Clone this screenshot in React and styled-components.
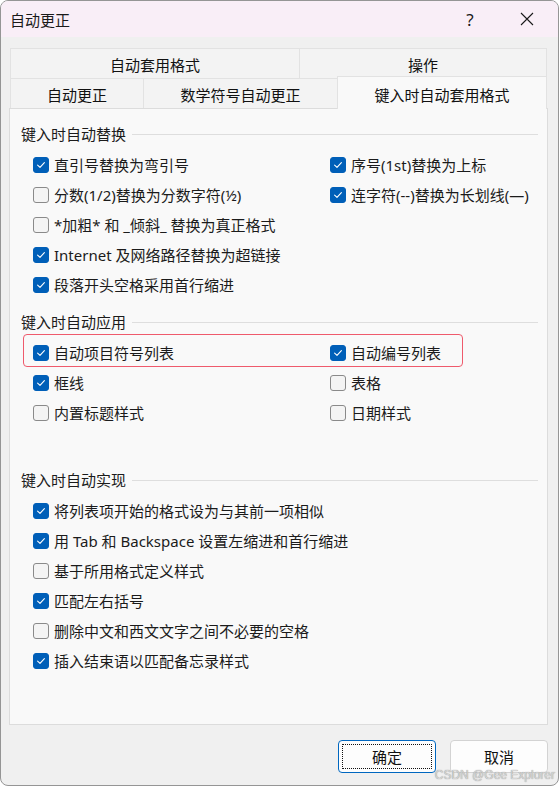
import styled, { createGlobalStyle, css } from 'styled-components'

const GlobalStyle = createGlobalStyle`
    html, body {
        margin: 0;
        padding: 0;
        background: #ffffff;
    }
    body {
        font-family: "Noto Sans", "Noto Sans CJK SC", sans-serif;
        color: #1b1b1b;
    }
`

const Dialog = styled.div`
    position: relative;
    width: 559px;
    height: 786px;
    box-sizing: border-box;
    border: 1px solid #959595;
    border-radius: 8px;
    overflow: hidden;
    background: #f0f0f0;
    display: flex;
    flex-direction: column;
`

const TitleBar = styled.div`
    height: 36px;
    flex: none;
    display: flex;
    align-items: center;
    padding-left: 9px;
    padding-right: 8px;
    background: #f9eef7;
`

const Title = styled.span`
    font-size: 15px;
    line-height: 20px;
    color: #1a1a1a;
    margin-top: 1px;
`

const TitleButton = styled.div`
    width: 46px;
    height: 36px;
    display: flex;
    align-items: center;
    justify-content: center;
    font-size: 17px;
    color: #1a1a1a;
    margin-left: ${(p) => p.$gap || 0}px;
`

const Body = styled.div`
    flex: 1;
    display: flex;
    flex-direction: column;
    padding: 11px 10px 0 8px;
`

const TabRow = styled.div`
    display: flex;
    height: 30px;
    margin: 0 1px;
`

const Tab = styled.div`
    box-sizing: border-box;
    width: ${(p) => (p.$width ? `${p.$width}px` : 'auto')};
    flex: ${(p) => (p.$width ? 'none' : 1)};
    display: flex;
    align-items: center;
    justify-content: center;
    font-size: 15px;
    line-height: 20px;
    color: #111;
    background: #f3f3f3;
    border-top: 1px solid #e2e2e2;
    border-left: 1px solid #e2e2e2;
    padding-top: 2px;
    &:last-child {
        border-right: 1px solid #e2e2e2;
    }
    ${(p) =>
        p.$active &&
        css`
            position: relative;
            z-index: 1;
            height: 33px;
            margin-top: -2px;
            background: #f9f9f9;
            padding-top: 3px;
        `}
`

const Panel = styled.div`
    box-sizing: border-box;
    height: 617px;
    border: 1px solid #dcdcdc;
    background: #f9f9f9;
    padding: 15px 9px 0 11px;
`

const Section = styled.div`
    margin-bottom: ${(p) => p.$after || 12}px;
`

const SectionTitle = styled.div`
    display: flex;
    align-items: center;
    gap: 6px;
    font-size: 15px;
    line-height: 20px;
    height: 20px;
    color: #1b1b1b;
    &::after {
        content: '';
        flex: 1;
        height: 1px;
        background: #dedede;
    }
`

const Rows = styled.div`
    margin-top: 6px;
    padding-left: 12px;
`

const Row = styled.div`
    position: relative;
    display: grid;
    grid-template-columns: 297px 1fr;
    height: 30px;
    align-items: center;
    ${(p) =>
        p.$highlight &&
        css`
            &::after {
                content: '';
                position: absolute;
                left: -10px;
                top: -4px;
                width: 438px;
                height: 31px;
                border: 1.5px solid #ef5a6c;
                border-radius: 4px;
                pointer-events: none;
            }
        `}
`

const Option = styled.label`
    display: flex;
    align-items: center;
    gap: 5px;
    font-size: 15px;
    line-height: 20px;
    color: #1b1b1b;
    white-space: nowrap;
`

const Box = styled.span`
    box-sizing: border-box;
    width: 16px;
    height: 16px;
    flex: none;
    border-radius: 3px;
    display: flex;
    align-items: center;
    justify-content: center;
    ${(p) =>
        p.$checked
            ? css`
                  background: #005fb8;
                  border: 1px solid #005fb8;
              `
            : css`
                  background: #f4f4f4;
                  border: 1px solid #8a8a8a;
              `}
`

const Footer = styled.div`
    display: flex;
    justify-content: flex-end;
    gap: 14px;
    padding-top: 15px;
    padding-right: 0;
`

const Button = styled.div`
    position: relative;
    box-sizing: border-box;
    width: 98px;
    height: 33px;
    border-radius: 4px;
    background: #fdfdfd;
    display: flex;
    align-items: center;
    justify-content: center;
    font-size: 15px;
    color: #111;
    border: 1px solid ${(p) => (p.$primary ? '#0067c0' : '#d3d3d3')};
    ${(p) =>
        p.$primary &&
        css`
            &::after {
                content: '';
                position: absolute;
                inset: 3px;
                border: 1px dotted #111;
                border-radius: 1px;
            }
        `}
`

const Watermark = styled.div`
    position: absolute;
    right: 3px;
    bottom: 3px;
    font-family: "Liberation Sans", sans-serif;
    font-size: 12px;
    line-height: 14px;
    color: #d6d6d6;
    text-shadow: 0 0 1px #7a7a7a;
`

function Check({ checked, label }) {
    return (
        <Option>
            <Box $checked={checked}>
                {checked && (
                    <svg width="10" height="10" viewBox="0 0 10 10">
                        <polyline
                            points="1.6,5.2 4,7.4 8.4,2.6"
                            fill="none"
                            stroke="#ffffff"
                            strokeWidth="1.1"
                            strokeLinecap="round"
                            strokeLinejoin="round"
                        />
                    </svg>
                )}
            </Box>
            {label}
        </Option>
    )
}

const sections = [
    {
        title: '键入时自动替换',
        rows: [
            [['直引号替换为弯引号', true], ['序号(1st)替换为上标', true]],
            [['分数(1/2)替换为分数字符(½)', false], ['连字符(--)替换为长划线(—)', true]],
            [['*加粗* 和 _倾斜_ 替换为真正格式', false]],
            [['Internet 及网络路径替换为超链接', true]],
            [['段落开头空格采用首行缩进', true]],
        ],
    },
    {
        title: '键入时自动应用',
        after: 42,
        rows: [
            [['自动项目符号列表', true], ['自动编号列表', true]],
            [['框线', true], ['表格', false]],
            [['内置标题样式', false], ['日期样式', false]],
        ],
        highlight: 0,
    },
    {
        title: '键入时自动实现',
        rows: [
            [['将列表项开始的格式设为与其前一项相似', true]],
            [['用 Tab 和 Backspace 设置左缩进和首行缩进', true]],
            [['基于所用格式定义样式', false]],
            [['匹配左右括号', true]],
            [['删除中文和西文文字之间不必要的空格', false]],
            [['插入结束语以匹配备忘录样式', true]],
        ],
    },
]

export default function App() {
    return (
        <>
            <GlobalStyle />
            <Dialog>
                <TitleBar>
                    <Title>自动更正</Title>
                    <TitleButton style={{ marginLeft: 'auto' }}>?</TitleButton>
                    <TitleButton $gap={11}>
                        <svg width="14" height="14" viewBox="0 0 14 14">
                            <path d="M1 1 L13 13 M13 1 L1 13" stroke="#1a1a1a" strokeWidth="1.1" />
                        </svg>
                    </TitleButton>
                </TitleBar>
                <Body>
                    <TabRow>
                        <Tab $width={289}>自动套用格式</Tab>
                        <Tab>操作</Tab>
                    </TabRow>
                    <TabRow>
                        <Tab $width={133}>自动更正</Tab>
                        <Tab $width={194}>数学符号自动更正</Tab>
                        <Tab $active>键入时自动套用格式</Tab>
                    </TabRow>
                    <Panel>
                        {sections.map((section) => (
                            <Section key={section.title} $after={section.after}>
                                <SectionTitle>{section.title}</SectionTitle>
                                <Rows>
                                    {section.rows.map((row, i) => (
                                        <Row key={i} $highlight={section.highlight === i}>
                                            {row.map(([label, checked]) => (
                                                <Check key={label} label={label} checked={checked} />
                                            ))}
                                        </Row>
                                    ))}
                                </Rows>
                            </Section>
                        ))}
                    </Panel>
                    <Footer>
                        <Button $primary>确定</Button>
                        <Button>取消</Button>
                    </Footer>
                </Body>
                <Watermark>CSDN @Gee Explorer</Watermark>
            </Dialog>
        </>
    )
}
